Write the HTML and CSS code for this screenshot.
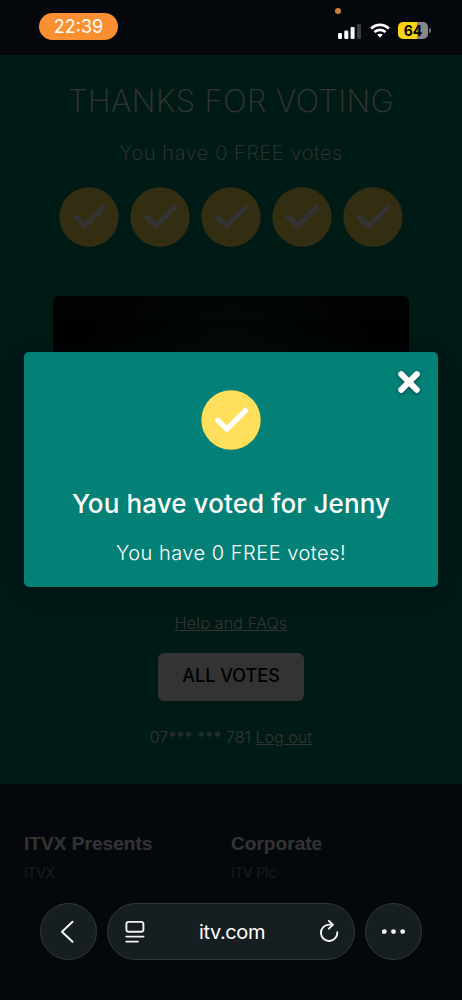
FILE: index.html
```html
<!DOCTYPE html>
<html lang="en">
<head>
    <meta charset="UTF-8">
    <meta name="viewport" content="width=device-width, initial-scale=1">
    <title>Vote</title>
    <link rel="stylesheet" href="styles.css">
</head>
<body>
    <svg class="defs" width="0" height="0">
        <symbol id="tick" viewBox="0 0 60 60">
            <circle cx="30" cy="30" r="29.7" fill="#ffdf5b"/>
            <path d="M16.6 30.2L25.8 39L44.4 20.6" fill="none" stroke="#fff" stroke-width="5.2" stroke-linecap="round"/>
        </symbol>
    </svg>

    <div class="page">
        <main class="vote">
            <h1>THANKS FOR VOTING</h1>
            <p class="remaining">You have 0 FREE votes</p>
            <div class="ticks">
                <svg><use href="#tick"/></svg>
                <svg><use href="#tick"/></svg>
                <svg><use href="#tick"/></svg>
                <svg><use href="#tick"/></svg>
                <svg><use href="#tick"/></svg>
            </div>
            <div class="video"></div>
            <a class="help" href="#">Help and FAQs</a>
            <button class="all-votes">ALL VOTES</button>
            <p class="account">07*** *** 781 <a href="#">Log out</a></p>
        </main>
        <footer class="footer">
            <div>
                <h2>ITVX Presents</h2>
                <a href="#">ITVX</a>
            </div>
            <div>
                <h2>Corporate</h2>
                <a href="#">ITV Plc</a>
            </div>
        </footer>
    </div>

    <div class="overlay">
        <div class="modal">
            <button class="close" aria-label="Close">
                <svg width="24" height="24" viewBox="0 0 24 24"><path d="M4.2 4.2L19.8 19.8M19.8 4.2L4.2 19.8" stroke="#fff" stroke-width="6" stroke-linecap="round"/></svg>
            </button>
            <svg class="modal-tick"><use href="#tick"/></svg>
            <h2>You have voted for Jenny</h2>
            <p>You have 0 FREE votes!</p>
        </div>
    </div>

    <!-- Phone status bar -->
    <div class="status">
        <span class="time">22:39</span>
        <span class="mic-dot"></span>
        <div class="status-icons">
            <svg width="24" height="16" viewBox="0 0 24 16" fill="#fff">
                <rect x="0" y="10" width="4" height="6" rx="1.2"/>
                <rect x="6.3" y="7.5" width="4" height="8.5" rx="1.2"/>
                <rect x="12.6" y="4" width="4" height="12" rx="1.2"/>
                <rect x="19" y="1" width="4" height="15" rx="1.2" fill="#3b3e41"/>
            </svg>
            <svg width="20" height="15" viewBox="0 0 20 15" fill="none" stroke="#fff" stroke-width="2.7">
                <path d="M1.1 5.6C6.1.6 13.9.6 18.9 5.6"/>
                <path d="M4.4 9.1C7.6 6.1 12.4 6.1 15.6 9.1"/>
                <path d="M10 14.6L7.2 11.8C8.8 10.3 11.2 10.3 12.8 11.8Z" fill="#fff" stroke="none"/>
            </svg>
            <div class="battery"><span>64</span></div>
        </div>
    </div>

    <!-- Browser controls -->
    <nav class="browser">
        <button class="round" aria-label="Back">
            <svg class="back" width="14" height="24" viewBox="0 0 14 24"><path d="M12.5 1.8L2 11.8L12.5 21.8" fill="none" stroke="#f1f3f4" stroke-width="2" stroke-linecap="round" stroke-linejoin="round"/></svg>
        </button>
        <div class="address">
            <svg width="20" height="24" viewBox="0 0 20 24" fill="none" stroke="#f1f3f4" stroke-width="1.9" stroke-linecap="round">
                <rect x="1.4" y="1.9" width="17" height="9.8" rx="2.3"/>
                <path d="M1.3 16.6H18.5M1.3 21.6H13"/>
            </svg>
            <span>itv.com</span>
            <svg width="20" height="24" viewBox="0 0 20 24" fill="none" stroke="#f1f3f4" stroke-width="1.9" stroke-linecap="round" stroke-linejoin="round">
                <path d="M18.3 12.2A8.2 8.2 0 1 1 10.1 4.6H13.7"/>
                <path d="M9.9 1L13.9 4.6L9.9 8.7"/>
            </svg>
        </div>
        <button class="round" aria-label="More">
            <svg width="24" height="6" viewBox="0 0 24 6" fill="#f1f3f4"><circle cx="2.3" cy="2.6" r="2.4"/><circle cx="11.5" cy="2.6" r="2.4"/><circle cx="20.7" cy="2.6" r="2.4"/></svg>
        </button>
    </nav>
</body>
</html>
```
FILE: styles.css
```css
* {
    box-sizing: border-box;
}
body {
    position: relative;
    width: 462px;
    height: 1000px;
    margin: 0;
    overflow: hidden;
    background: #14283c;
    color: #fff;
    font-family: Inter, "Liberation Sans", sans-serif;
}
h1, h2, p {
    margin: 0;
}
button {
    border: none;
    padding: 0;
    font-family: inherit;
}
svg {
    display: block;
}
.defs {
    position: absolute;
}
.page {
    padding-top: 55px;
}
.vote {
    display: flex;
    flex-direction: column;
    align-items: center;
    height: 729px;
    padding-top: 26px;
    background: #00826e;
    font-weight: 300;
}
.vote h1 {
    height: 40px;
    line-height: 40px;
    font-size: 31px;
    font-weight: 200;
    letter-spacing: 0.45px;
    white-space: nowrap;
}
.remaining {
    margin-top: 19px;
    font-size: 20px;
    line-height: 26px;
    letter-spacing: 0.6px;
    font-weight: 200;
}
.ticks {
    display: flex;
    gap: 11px;
    margin-top: 21px;
}
.ticks svg, .modal-tick {
    width: 60px;
    height: 60px;
}
.video {
    width: 356px;
    height: 270px;
    margin-top: 49px;
    border-radius: 6px;
    background: radial-gradient(ellipse 45% 80% at 50% 40%, #144020, #080a08);
}
.help {
    margin-top: 46px;
    color: #fff;
    font-size: 16px;
    line-height: 22px;
    letter-spacing: 0.2px;
}
.all-votes {
    width: 146px;
    height: 48px;
    margin-top: 19px;
    border-radius: 6px;
    background: #fff;
    color: #000;
    font-size: 18px;
    font-weight: 500;
    padding-bottom: 3px;
}
.account {
    margin-top: 25px;
    font-size: 16px;
    line-height: 22px;
    letter-spacing: 0.05px;
}
.account a {
    color: #fff;
}
.footer {
    display: flex;
    padding: 49px 24px 0;
}
.footer div {
    width: 207px;
}
.footer h2 {
    font: bold 19px/22px "Liberation Sans", Arial, sans-serif;
    letter-spacing: 0.05px;
}
.footer a {
    display: block;
    margin-top: 9px;
    color: #c8ccd0;
    font-size: 14px;
    line-height: 18px;
    font-weight: 200;
    text-decoration: none;
}
/* Dims the page behind the modal */
.overlay {
    position: absolute;
    inset: 0;
    padding: 352px 24px 0;
    background: rgba(0, 0, 0, 0.8);
}
.modal {
    position: relative;
    display: flex;
    flex-direction: column;
    align-items: center;
    width: 414px;
    height: 235px;
    padding-top: 38px;
    border-radius: 5px;
    background: #038177;
    box-shadow: 0 4px 30px rgba(0, 12, 20, 0.5);
}
.close {
    position: absolute;
    top: 18px;
    right: 17px;
    background: none;
    filter: drop-shadow(0 1px 2px rgba(0, 0, 0, 0.4));
}
.modal h2 {
    margin-top: 37px;
    font-size: 26px;
    line-height: 34px;
    font-weight: 500;
    letter-spacing: 0.1px;
    white-space: nowrap;
}
.modal p {
    margin-top: 19px;
    font-size: 20px;
    line-height: 26px;
    font-weight: 300;
    letter-spacing: 0.5px;
}
.status {
    position: absolute;
    top: 0;
    left: 0;
    display: flex;
    justify-content: space-between;
    width: 462px;
    padding: 13px 34px 0 39px;
}
.time {
    width: 79px;
    height: 27px;
    border-radius: 14px;
    background: #fb9032;
    font-size: 18px;
    line-height: 27px;
    text-align: center;
}
.mic-dot {
    position: absolute;
    top: 8px;
    left: 335px;
    width: 6px;
    height: 6px;
    border-radius: 50%;
    background: #c9803a;
}
.status-icons {
    display: flex;
    align-items: center;
    gap: 8px;
    padding-top: 8px;
}
.battery {
    position: relative;
    width: 30px;
    height: 17px;
    border-radius: 5px;
    background: linear-gradient(90deg, #f7d515 65%, #85878a 65%);
    color: #000;
    font-size: 14px;
    font-weight: 700;
    line-height: 17px;
    text-align: center;
}
.battery::after {
    content: "";
    position: absolute;
    top: 6px;
    right: -3px;
    width: 2px;
    height: 5px;
    border-radius: 0 2px 2px 0;
    background: #707275;
}
.browser {
    position: absolute;
    top: 903px;
    left: 0;
    display: flex;
    justify-content: center;
    gap: 10px;
    width: 462px;
}
.round, .address {
    display: flex;
    align-items: center;
    height: 57px;
    border: 1px solid #30383d;
    border-radius: 29px;
    background: #171e22;
}
.round {
    justify-content: center;
    width: 57px;
}
.back {
    margin-right: 4px;
}
.address {
    justify-content: space-between;
    width: 248px;
    padding: 0 15px 0 17px;
    font-size: 20px;
    letter-spacing: -0.4px;
}
```
